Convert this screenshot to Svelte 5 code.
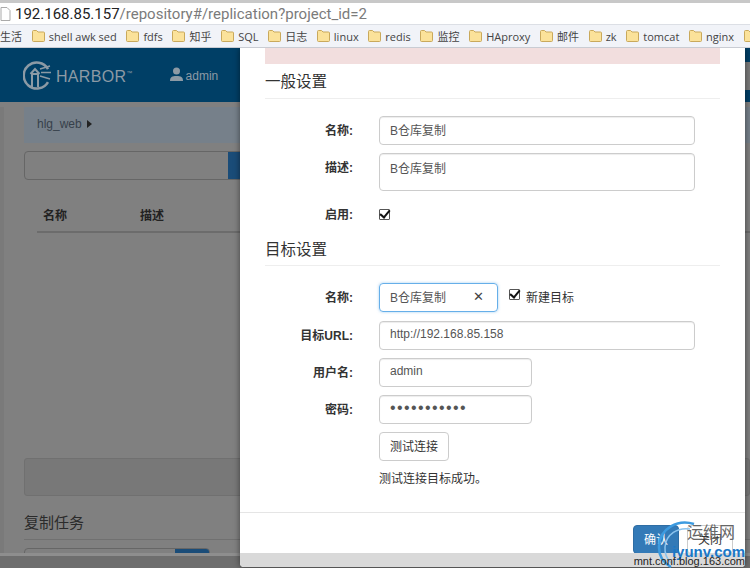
<script>
  const bookmarks = [
    { name: '生活', bare: true }, { name: 'shell awk sed' }, { name: 'fdfs' }, { name: '知乎' },
    { name: 'SQL' }, { name: '日志' }, { name: 'linux' }, { name: 'redis' }, { name: '监控' },
    { name: 'HAproxy' }, { name: '邮件' }, { name: 'zk' }, { name: 'tomcat' }, { name: 'nginx' }, { name: '' }
  ];
</script>

<div class="window">
  <div class="address">
    <svg class="page-icon" width="11" height="14" viewBox="0 0 11 14"><path d="M1 .5h6l3 3v10H1z" fill="#fff" stroke="#aaa"/></svg>
    <span class="host">192.168.85.157</span><span class="path">/repository#/replication?project_id=2</span>
  </div>
  <div class="bookmarks">
    {#each bookmarks as b}
      <span class="bookmark">
        {#if !b.bare}
          <svg width="13" height="12" viewBox="0 0 13 12"><path d="M.5 1.500q0-1 1-1h3l1.500 1.500h5.500q1 0 1 1v7.500q0 1-1 1h-10q-1 0-1-1z" fill="#fbe29a" stroke="#c9a95c"/></svg>
        {/if}
        {#if b.name}<span>{b.name}</span>{/if}
      </span>
    {/each}
  </div>

  <div class="viewport">
    <div class="page">
      <header class="nav">
        <svg class="logo" width="29" height="29" viewBox="0 0 29 29" fill="none" stroke="#8c9aa5">
          <path d="M25 8A13 13 0 1 0 25 21" stroke-width="2.500"/>
          <path d="M9 26V13h6v13M7.500 13l4.500-5 4.500 5" stroke-width="2"/>
          <path d="M17 8l10-3M18 11.500h10M17 15l10 3" stroke-width="1.500"/>
        </svg>
        <span class="brand">HARBOR<sup>™</sup></span>
        <svg class="user" width="13" height="14" viewBox="0 0 13 14"><circle cx="6.500" cy="4" r="3.500" fill="#8c9aa5"/><path d="M0 14c0-4 2-5 6.500-5s6.500 1 6.500 5z" fill="#8c9aa5"/></svg>
        <span class="admin">admin</span>
        <span class="edge"></span>
      </header>
      <div class="content">
        <div class="crumb">hlg_web <i class="tri"></i></div>
        <div class="search"><span class="search-btn"></span></div>
        <div class="thead"><span class="c1">名称</span><span>描述</span></div>
        <div class="well"></div>
        <h2 class="jobs">复制任务</h2>
        <div class="search small"><span class="search-btn"></span></div>
      </div>
    </div>

    <div class="scrollbar"></div>

    <div class="modal">
      <div class="alert"></div>
      <h3>一般设置</h3>
      <div class="row r1"><label>名称:</label><div class="input wide">B仓库复制</div></div>
      <div class="row"><label>描述:</label><div class="input wide area">B仓库复制</div></div>
      <div class="row r3"><label>启用:</label><span class="check"></span></div>
      <h3 class="second">目标设置</h3>
      <div class="row r4">
        <label>名称:</label>
        <div class="input focus"><span>B仓库复制</span><span class="x">✕</span></div>
        <span class="check"></span><span class="new">新建目标</span>
      </div>
      <div class="row r5"><label>目标URL:</label><div class="input wide">http://192.168.85.158</div></div>
      <div class="row"><label>用户名:</label><div class="input mid">admin</div></div>
      <div class="row"><label>密码:</label><div class="input mid dots">•••••••••••</div></div>
      <div class="row"><label></label><div class="btn">测试连接</div></div>
      <div class="row msg"><label></label><span>测试连接目标成功。</span></div>
      <div class="footer">
        <div class="btn primary">确认</div>
        <div class="btn">关闭</div>
      </div>
      <div class="modal-strip"></div>
    </div>

    <div class="mark">
      <svg class="swirl" width="44" height="50" viewBox="0 0 44 50" fill="none" stroke="#3d9be0">
        <path d="M40 4C24 -1 6 8 5 26c-.500 10 5 17 12 21" stroke-width="2.500"/>
        <path d="M36 9C24 7 12 14 11 27c-.500 7 2 12 6 16" stroke-width="1.500" stroke="#8cc4ee"/>
      </svg>
      <span class="mark-cn">运维网</span>
      <span class="mark-en">iyunv.com</span>
      <span class="mark-blog">mnt.conf.blog.163.com</span>
    </div>
  </div>
</div>

<style>
  :global(body) { margin: 0; background: #fff; }
  .window { width: 750px; height: 568px; display: flex; flex-direction: column; overflow: hidden;
    font-family: "Liberation Sans", "Noto Sans CJK SC", sans-serif; font-size: 12px; color: #555; }
  .address { height: 21px; margin-top: 3px; display: flex; align-items: center; flex: none;
    font: 15px Roboto, "Open Sans", sans-serif; box-shadow: 0 -3px 0 #c8c8c8; white-space: nowrap; }
  .page-icon { margin: 0 4px 0 0; flex: none; }
  .host { color: #222; }
  .path { color: #7b7b7b; }
  .bookmarks { height: 24px; flex: none; background: #f1f3f8; border-top: 1px solid #dcdfe5; border-bottom: 1px solid #c9ccd3;
    box-sizing: border-box; display: flex; align-items: center; gap: 9.700px; white-space: nowrap; overflow: hidden;
    font: 11px "Open Sans", "Noto Sans CJK SC", sans-serif; color: #444; }
  .bookmark { display: inline-flex; align-items: center; gap: 4px; flex: none; }
  .viewport { position: relative; flex: 1; overflow: hidden; background: #808080; }
  .page { height: 100%; }
  .nav { position: relative; height: 54px; background: #003f66; display: flex; align-items: center; padding-left: 23px; color: #8c9aa5; }
  .edge { position: absolute; right: 0; top: 14px; width: 5px; height: 28px; background: #7a7a7a; }
  .logo { flex: none; margin-top: 1px; }
  .brand { font-size: 16px; margin: 3px 0 0 4px; letter-spacing: .3px; }
  .brand sup { font-size: 6px; vertical-align: 7px; }
  .user { margin-left: 37px; margin-top: -2px; }
  .admin { margin: 1px 0 0 3px; font-size: 12px; }
  .content { padding-left: 20px; border-left: 4px solid #7a7a7a; }
  .crumb { margin-top: 5px; height: 36px; background: #76808a; display: flex; align-items: center; padding: 0 0 2px 13px; box-sizing: border-box; color: #36404a; gap: 5px; }
  .tri { width: 0; height: 0; border-left: 5px solid #222; border-top: 4px solid transparent; border-bottom: 4px solid transparent; }
  .search { margin-top: 8px; height: 27px; border: 1px solid #666; border-radius: 4px; display: flex; justify-content: flex-end; overflow: hidden; width: 260px; }
  .search-btn { background: #1a4c78; width: 57px; }
  .thead { margin: 26px 0 0 13px; height: 25px; line-height: 21px; padding-left: 6px; border-bottom: 2px solid #6c6c6c; display: flex; color: #222; font-weight: bold; }
  .thead .c1 { width: 97px; }
  .well { margin-top: 225px; height: 36px; background: #787878; border: 1px solid #707070; border-radius: 3px; }
  .jobs { margin: 17px 0 0; font-size: 15px; line-height: 20px; font-weight: normal; color: #2b2b2b; border-bottom: 1px solid #707070; padding-bottom: 6px; }
  .search.small { margin-top: 8px; width: 184px; }
  .search.small .search-btn { width: 34px; }

  .scrollbar { position: absolute; left: 0; right: 0; bottom: 0; height: 12px; background: #6e6e6e; border-top: 3px solid #8e8e8e; }
  .modal { position: absolute; left: 240px; top: 0; width: 505px; height: 519px; background: #fff; box-sizing: border-box; padding: 0 25px;
    border-radius: 0 0 4px 4px; overflow: hidden; box-shadow: 0 0 6px rgba(0,0,0,.5); }
  .modal-strip { position: absolute; left: 0; right: 0; bottom: 0; height: 14px; background: #d9d9d9; }
  .alert { height: 16px; background: #f2dede; }
  h3 { margin: 9px 0 0; height: 25px; border-bottom: 1px solid #eee; font-size: 15.500px; font-weight: normal; color: #333; line-height: 18px; }
  h3.second { margin-top: 11px; line-height: 20px; }
  .row { display: flex; align-items: center; margin-top: 8px; min-height: 29px; }
  .row:has(.area) { align-items: flex-start; }
  .row:has(.area) label { margin-top: 5px; padding-bottom: 0; }
  .row label { width: 88px; text-align: right; font-weight: bold; color: #333; margin-right: 26px; flex: none; padding-bottom: 3px; }
  .r1 { margin-top: 17px; }
  .r3 { margin-top: 9px; }
  .r4 { margin-top: 17px; }
  .r5 { margin-top: 9px; }
  .input { height: 29px; box-sizing: border-box; border: 1px solid #ccc; border-radius: 4px; padding: 0 10px 3px; display: flex; align-items: center; color: #555;
    box-shadow: inset 0 1px 1px rgba(0,0,0,.075); }
  .wide { width: 316px; }
  .mid { width: 153px; }
  .area { height: 38px; align-items: flex-start; padding-top: 5px; }
  .dots { font-size: 16px; letter-spacing: 1.400px; }
  .focus { width: 119px; border-color: #66afe9; justify-content: space-between; box-shadow: 0 0 3px rgba(102,175,233,.6); }
  .x { color: #444; font-size: 13px; margin-right: 3px; }
  .check { width: 9px; height: 9px; border: 1px solid #555; border-radius: 1px; display: inline-block; position: relative; flex: none; }
  .check::after { content: ""; position: absolute; left: 2px; top: -2px; width: 4px; height: 8px; border: solid #111; border-width: 0 2px 2px 0; transform: rotate(40deg); }
  .r4 .check { margin-left: 11px; align-self: flex-start; margin-top: 6px; }
  .new { margin-left: 6px; margin-top: -3px; color: #333; }
  .btn { height: 29px; box-sizing: border-box; padding: 0 10px 2px; border: 1px solid #ccc; border-radius: 4px; display: flex; align-items: center; color: #333; background: #fff; }
  .msg { min-height: 17px; margin-top: 9px; color: #333; }
  .msg span { margin-top: -3px; }
  .footer { position: absolute; left: 0; right: 0; top: 464px; border-top: 1px solid #e5e5e5; display: flex; justify-content: flex-end; gap: 8px; padding: 12px 12px 0 0; }
  .primary { background: #337ab7; border-color: #2e6da4; color: #fff; }
  .mark { position: absolute; right: 0; bottom: 0; width: 120px; height: 50px; }
  .mark span { position: absolute; white-space: nowrap; }
  .swirl { position: absolute; left: 24px; top: 2px; }
  .mark-cn { right: 15px; top: 5px; font-size: 16px; line-height: 20px; color: #666; }
  .mark-en { right: 5px; top: 25px; font-size: 15px; line-height: 18px; font-weight: bold; color: #1a78c8; }
  .mark-blog { right: 5px; top: 36px; font-size: 11px; line-height: 14px; color: #222; }
</style>
